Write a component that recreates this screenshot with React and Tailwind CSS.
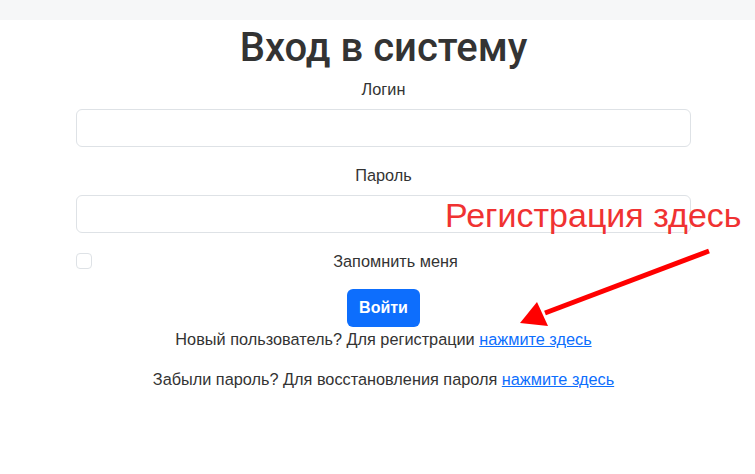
import React from 'react';

const font = { fontFamily: '"Liberation Sans", Arial, sans-serif' };

const Field = ({ label, type = 'text' }) => (
  <div className="flex flex-col items-center">
    <label className="text-[16.3px] leading-[24px] text-[#333] mb-[8px]">{label}</label>
    <input
      type={type}
      className="w-full h-[38px] rounded-[6px] border border-[#dee2e6] bg-white px-3 outline-none"
    />
  </div>
);

export default function App() {
  return (
    <div className="relative w-[755px] h-[474px] bg-white overflow-hidden" style={font}>
      {/* top strip */}
      <div className="h-[20px] bg-[#f6f7f8]" />

      <div className="pl-[12px]">
        <div className="w-[615px] mx-auto flex flex-col">
          <h1
            className="text-center text-[40px] leading-[48px] font-medium text-[#333] mt-[4px] mb-[5px]"
            style={{ fontFamily: 'Roboto, "Liberation Sans", sans-serif' }}
          >
            Вход в систему
          </h1>

          <Field label="Логин" />
          <div className="mt-[16px]">
            <Field label="Пароль" type="password" />
          </div>

          <div className="flex items-center gap-[8px] mt-[16px] h-[24px]">
            <input
              type="checkbox"
              className="w-[16px] h-[16px] shrink-0 appearance-none rounded-[4px] border border-[#dee2e6] bg-white"
            />
            <span className="flex-1 text-center text-[16.3px] leading-[24px] text-[#333]">Запомнить меня</span>
          </div>

          <div className="flex justify-center mt-[16px]">
            <button className="h-[38px] px-[12px] rounded-[6px] bg-[#0d6efd] text-white text-[16px] font-bold">
              Войти
            </button>
          </div>

          <p className="text-center text-[16.3px] leading-[24px] text-[#333]">
            Новый пользователь? Для регистрации{' '}
            <a href="#" className="text-[#0d6efd] underline">нажмите здесь</a>
          </p>
          <p className="text-center text-[16.3px] leading-[24px] text-[#333] mt-[16px]">
            Забыли пароль? Для восстановления пароля{' '}
            <a href="#" className="text-[#0d6efd] underline">нажмите здесь</a>
          </p>
        </div>
      </div>

      {/* annotation */}
      <div className="absolute left-[445px] top-[195px] text-[34px] leading-[40px] text-[#f03232]">
        Регистрация здесь
      </div>
      <svg className="absolute left-0 top-0 pointer-events-none" width="755" height="474">
        <line x1="709" y1="251" x2="545" y2="313" stroke="#ff0000" strokeWidth="5" />
        <polygon points="520,323 537,302 548,326" fill="#ff0000" />
      </svg>
    </div>
  );
}
